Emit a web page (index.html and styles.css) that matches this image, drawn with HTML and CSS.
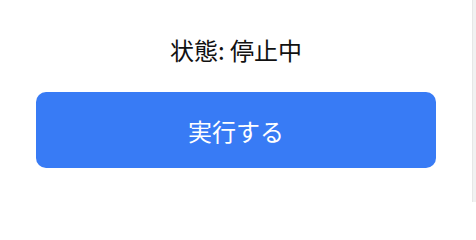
FILE: index.html
```html
<!DOCTYPE html>
<html lang="ja">
<head>
<meta charset="utf-8">
<link rel="stylesheet" href="styles.css">
</head>
<body>
<div class="page">
  <main class="panel">
    <div class="status">状態: 停止中</div>
    <button class="run">実行する</button>
  </main>
  <div class="track"></div>
</div>
</body>
</html>
```
FILE: styles.css
```css
html, body {
  margin: 0;
  padding: 0;
  background: #ffffff;
}
body {
  font-family: "Noto Sans CJK JP", "Noto Sans", sans-serif;
  width: 476px;
  height: 202px;
  overflow: hidden;
}
.page {
  display: flex;
  height: 202px;
}
.panel {
  flex: 1;
  display: flex;
  flex-direction: column;
  align-items: center;
  padding: 35px 36px 0;
}
.status {
  font-size: 24px;
  line-height: 30px;
  color: #111111;
}
.run {
  margin-top: 27px;
  width: 400px;
  height: 76px;
  border: none;
  border-radius: 10px;
  background: #387bf5;
  color: #ffffff;
  font-family: inherit;
  font-size: 24px;
  padding: 0;
}
.track {
  width: 3px;
  background: #f1f1f1;
  border-left: 1px solid #e6e6e6;
}
```
